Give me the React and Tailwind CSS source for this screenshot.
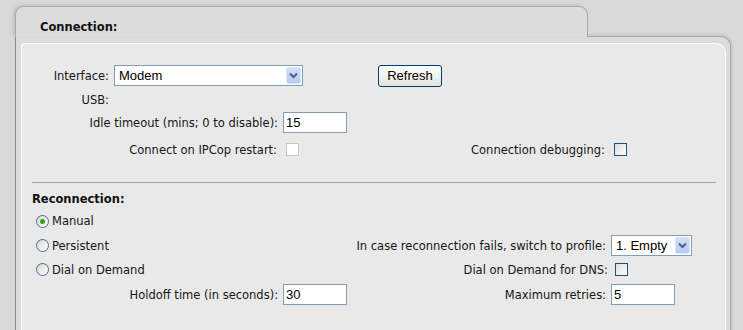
import React from "react";

const label = "text-[11.5px] leading-[14px] text-[#161616] whitespace-nowrap";
const ctl = "font-['Liberation_Sans',Arial,sans-serif] text-[13px] text-black";

function Select({ className, value }) {
  return (
    <div className={`flex h-[21px] items-center border border-[#7f9db9] bg-white ${className}`}>
      <span className={`${ctl} flex-1 pl-[4px] leading-none`}>{value}</span>
      <div className="mr-px flex h-[17px] w-[15px] items-center justify-center rounded-[2px] border border-[#dbe4fb] bg-gradient-to-b from-[#d4defb] to-[#b7c9f5]">
        <svg width="9" height="7" viewBox="0 0 9 7">
          <path d="M1 1.5 L4.5 5 L8 1.5" fill="none" stroke="#4d6185" strokeWidth="2" />
        </svg>
      </div>
    </div>
  );
}

function Input({ className = "", value }) {
  return (
    <div className={`flex h-[21px] w-[64px] items-center border border-[#7f9db9] bg-white pl-[2px] ${ctl} ${className}`}>
      {value}
    </div>
  );
}

function Check({ disabled, className = "" }) {
  return disabled ? (
    <div className={`h-[13px] w-[13px] border border-[#cac8bb] bg-white ${className}`} />
  ) : (
    <div className={`h-[13px] w-[13px] border border-[#1c5180] bg-gradient-to-br from-[#dcdcd7] to-white ${className}`} />
  );
}

function Radio({ checked, text }) {
  return (
    <div className="flex items-center">
      <div className="ml-[14px] flex h-[13px] w-[13px] items-center justify-center rounded-full border border-[#4b6a8c] bg-gradient-to-br from-[#d9d9d4] to-white">
        {checked && <div className="h-[5px] w-[5px] rounded-full bg-[#2ea12e]" />}
      </div>
      <span className={`${label} ml-[3px]`}>{text}</span>
    </div>
  );
}

export default function App() {
  return (
    <div className="h-[330px] w-[743px] overflow-hidden bg-[#d9d9d9] pt-[6px] font-['DejaVu_Sans',Verdana,sans-serif]">
      {/* tab header */}
      <div className="relative z-10 -mb-px ml-[15px] h-[31px] w-[573px] rounded-t-[9px] border-x border-t border-[#aaaaaa] bg-[#dcdcdc] pl-[24px] pt-[13px] shadow-[-2px_-1px_3px_rgba(0,0,0,0.12)]">
        <div className="text-[11.5px] font-bold leading-[14px] text-[#111]">Connection:</div>
      </div>

      {/* frame body */}
      <div className="ml-[15px] w-[716px] rounded-tr-[10px] border-x border-t border-l-[#8a8a8a] border-r-[#a6a6a6] border-t-[#aaaaaa] bg-[#dcdcdc] pl-[5px] pr-[4px] pt-[6px] shadow-[1px_-1px_3px_rgba(0,0,0,0.12)]">
        <div className="h-[300px] rounded-tl-[4px] rounded-tr-[10px] border-x border-t border-white bg-[#e9e9e9]">
          {/* Connection section */}
          <div className="mt-[21px] flex h-[21px] items-center">
            <span className={`${label} w-[87px] text-right`}>Interface:</span>
            <Select className="ml-[5px] w-[189px]" value="Modem" />
            <div className={`${ctl} ml-[75px] flex h-[22px] w-[64px] items-center justify-center rounded-[3px] border border-[#003c74] bg-gradient-to-b from-white to-[#e3e3dc]`}>
              Refresh
            </div>
          </div>
          <div className="mt-[2px] flex h-[23px] items-center">
            <span className={`${label} w-[87px] text-right`}>USB:</span>
          </div>
          <div className="mt-px flex h-[21px] items-center">
            <span className={`${label} w-[256px] text-right`}>Idle timeout (mins; 0 to disable):</span>
            <Input className="ml-[5px]" value="15" />
          </div>
          <div className="mt-[6px] flex h-[21px] items-center">
            <span className={`${label} w-[255px] text-right`}>Connect on IPCop restart:</span>
            <Check disabled className="ml-[9px]" />
            <span className={`${label} w-[306px] text-right`}>Connection debugging:</span>
            <Check className="ml-[9px]" />
          </div>

          <div className="ml-[10px] mt-[22px] w-[684px] border-t border-[#aaa898]" />

          {/* Reconnection section */}
          <div className="ml-[10px] mt-[8px] h-[16px] text-[11.5px] font-bold leading-[16px] text-[#111]">Reconnection:</div>
          <div className="mt-[4px] flex h-[20px] items-center">
            <Radio checked text="Manual" />
          </div>
          <div className="mt-[4px] flex h-[21px] items-center">
            <div className="w-[256px]">
              <Radio text="Persistent" />
            </div>
            <span className={`${label} w-[328px] text-right`}>In case reconnection fails, switch to profile:</span>
            <Select className="ml-[5px] w-[81px]" value="1. Empty" />
          </div>
          <div className="mt-[3px] flex h-[21px] items-center">
            <div className="w-[256px]">
              <Radio text="Dial on Demand" />
            </div>
            <span className={`${label} w-[330px] text-right`}>Dial on Demand for DNS:</span>
            <Check className="ml-[7px]" />
          </div>
          <div className="mt-[4px] flex h-[21px] items-center">
            <span className={`${label} w-[256px] text-right`}>Holdoff time (in seconds):</span>
            <Input className="ml-[5px]" value="30" />
            <span className={`${label} w-[259px] text-right`}>Maximum retries:</span>
            <Input className="ml-[5px]" value="5" />
          </div>
        </div>
      </div>
    </div>
  );
}
